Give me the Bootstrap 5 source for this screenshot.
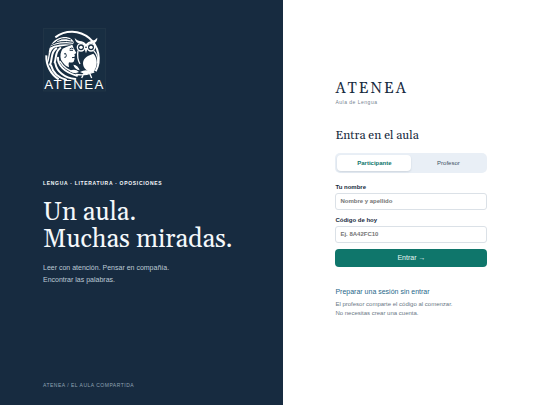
<!DOCTYPE html>
<html lang="es">
<head>
<meta charset="utf-8">
<meta name="viewport" content="width=device-width, initial-scale=1">
<title>Atenea · Aula de Lengua</title>
<link href="https://cdn.jsdelivr.net/npm/bootstrap@5.3.0/dist/css/bootstrap.min.css" rel="stylesheet">
<style>
:root { --ink: #172b40; --green: #0f766b; }
body { font-family: "Liberation Sans", Arial, sans-serif; font-size: 7px; color: var(--ink); background: #fff; }
.split { display: grid; grid-template-columns: 1.1fr 1fr; }
.hero { background: var(--ink); color: #f4f8fb; padding: 28px 20px 16px 43px; }
.crest { width: 64px; height: 64px; }
.crest text { font: 40px "Liberation Sans", Arial, sans-serif; letter-spacing: 4px; }
.serif { font-family: Georgia, Gelasio, "Liberation Serif", serif; font-weight: 400; }
.message { padding-bottom: 9px; }
.kicker { font-size: 5px; font-weight: 700; letter-spacing: .14em; line-height: 8px; margin-bottom: 13px; }
.headline { font-size: 25px; line-height: 27px; margin-bottom: 8px; }
.lede { font-size: 7px; line-height: 12px; color: #bdcad5; }
.foot { font-size: 5px; line-height: 8px; letter-spacing: .1em; color: #8fa2b3; }
.entry { padding-bottom: 8px; }
.panel { width: 152px; }
.brand { font-size: 15px; line-height: 18px; letter-spacing: 2px; }
.tagline { font-size: 5px; line-height: 8px; letter-spacing: .1em; color: #76838f; margin: 0 0 22px; }
.title { font-size: 12px; line-height: 16px; margin-bottom: 9px; }
.switch { background: #e9eff6; border-radius: 5px; padding: 2px; margin-bottom: 10px; }
.switch .btn { font-size: 6px; line-height: 16px; padding: 0; border: 0; border-radius: 4px; color: #3d5063; }
.switch .btn.active { background: #fff; color: var(--green); font-weight: 700; box-shadow: 0 1px 2px #172b4022; }
.form-label { display: block; font-size: 6px; line-height: 8px; font-weight: 700; margin-bottom: 2px; }
.form-control { font-size: 6px; line-height: 9px; font-weight: 700; padding: 3px 4px; border-color: #dbe1e7; border-radius: 3px; margin-bottom: 6px; }
.form-control::placeholder { color: #757575; }
.enter { font-size: 7px; line-height: 18px; padding: 0; border: 0; border-radius: 4px; background: var(--green); color: #e6f5f2; }
.prepare { font-size: 7px; line-height: 9px; color: #27678a; margin: 20px 0 4px; }
.note { font-size: 6px; line-height: 9px; color: #6b7885; }
</style>
</head>
<body>
<main class="split min-vh-100">
  <section class="hero d-flex flex-column justify-content-between">
    <svg class="crest" viewBox="3 0 192 192" role="img" aria-label="Atenea">
      <rect x="4" y="2" width="187" height="187" fill="#182e42" stroke="#263a4a" stroke-width="2"/>
      <path d="M40 28A81 81 0 0 1 161 130" fill="none" stroke="#fff" stroke-width="6"/>
      <path d="M13 82A81 81 0 0 0 50 154" fill="none" stroke="#fff" stroke-width="6"/>
      <path d="M20 80C20 52 36 32 61 28C78 25 91 32 96 44L90 50L40 58Q26 64 20 80Z" fill="#fff"/>
      <path d="M62 62Q73 56 91 50L95 61L103 75L97 79L99 84L96 88L98 92L95 101Q89 105 81 103Q78 108 81 118Q66 112 57 95Q52 76 62 62Z" fill="#fff"/>
      <g fill="none" stroke="#182e42" stroke-width="3">
        <path d="M25 52Q52 35 94 43M22 58Q50 43 92 49M36 47Q57 24 87 36M83 63Q89 58 94 62M83 67L93 67M90 89L98 88M66 78Q72 72 73 83Q72 90 67 88"/>
      </g>
      <g fill="none" stroke="#fff" stroke-linecap="round">
        <path d="M55 60C38 72 44 88 38 103M43 61C24 75 33 92 24 110" stroke-width="6"/>
        <path d="M31 61C18 76 22 92 17 102" stroke-width="4"/>
        <path d="M48 89C47 111 66 133 105 143M40 106C44 130 67 150 100 153M27 112C33 135 51 150 72 155" stroke-width="6"/>
        <path d="M54 100C65 119 77 128 101 134" stroke-width="4"/>
      </g>
      <path d="M98 30Q107 40 119 40Q127 42 132 48Q138 41 148 39Q159 38 166 29Q166 40 157 45L142 46L132 58L121 46L109 46Q101 43 98 30Z" fill="#fff"/>
      <g fill="none" stroke="#fff" stroke-width="4">
        <circle cx="117" cy="58" r="11"/><circle cx="147" cy="58" r="11"/>
        <path d="M108 68Q104 91 114 108M155 68Q170 84 167 107"/>
      </g>
      <g fill="#fff">
        <circle cx="117" cy="58" r="5"/><circle cx="147" cy="58" r="5"/>
        <path d="M127 60L132 76L137 60ZM154 77C167 91 169 113 153 134C136 132 123 121 123 105C124 89 139 82 154 77Z"/>
        <path d="M94 110Q109 112 113 127Q98 124 94 110ZM83 129Q99 120 111 132Q97 139 83 129ZM114 132Q131 123 143 130L160 127Q145 139 129 139Z"/>
      </g>
      <path d="M102 139Q129 144 157 132M126 136L119 150M143 136L149 150" fill="none" stroke="#fff" stroke-width="4"/>
      <text x="7" y="183" fill="#fff">ATENEA</text>
    </svg>
    <div class="message">
      <p class="kicker">LENGUA · LITERATURA · OPOSICIONES</p>
      <h1 class="serif headline">Un aula.<br>Muchas miradas.</h1>
      <p class="lede mb-0">Leer con atención. Pensar en compañía.<br>Encontrar las palabras.</p>
    </div>
    <p class="foot mb-0">ATENEA / EL AULA COMPARTIDA</p>
  </section>
  <section class="entry d-flex align-items-center justify-content-center">
    <div class="panel">
      <div class="serif brand">ATENEA</div>
      <p class="tagline">Aula de Lengua</p>
      <h2 class="serif title">Entra en el aula</h2>
      <div class="switch d-flex">
        <button type="button" class="btn active flex-fill w-50">Participante</button>
        <button type="button" class="btn flex-fill w-50">Profesor</button>
      </div>
      <form>
        <label class="form-label" for="name">Tu nombre</label>
        <input class="form-control" id="name" type="text" placeholder="Nombre y apellido">
        <label class="form-label" for="code">Código de hoy</label>
        <input class="form-control" id="code" type="text" placeholder="Ej. 8A42FC10">
        <button type="button" class="btn enter w-100">Entrar →</button>
      </form>
      <a class="prepare d-block text-decoration-none" href="#">Preparar una sesión sin entrar</a>
      <p class="note mb-0">El profesor comparte el código al comenzar.<br>No necesitas crear una cuenta.</p>
    </div>
  </section>
</main>
<script src="https://cdn.jsdelivr.net/npm/bootstrap@5.3.0/dist/js/bootstrap.bundle.min.js"></script>
</body>
</html>
